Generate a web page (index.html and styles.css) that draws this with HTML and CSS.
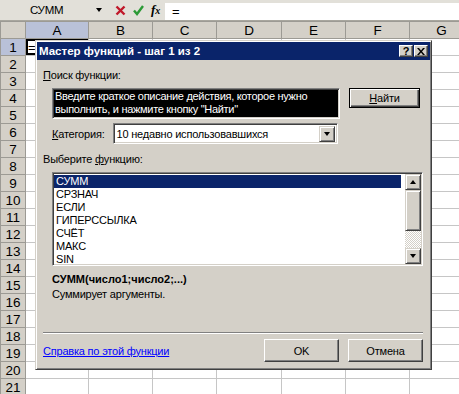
FILE: index.html
```html
<!DOCTYPE html>
<html lang="ru">
<head>
  <meta charset="UTF-8" />
  <title>Мастер функций</title>
  <link rel="stylesheet" href="styles.css">
</head>
<body>
  <div class="formula-bar">
    <div class="name-box">СУММ<span class="name-arrow"></span></div>
    <div class="fb-buttons">
      <svg width="11" height="11" viewBox="0 0 11 11"><path d="M1.5 1.5 L9.5 9.5 M9.5 1.5 L1.5 9.5" stroke="#c0182a" stroke-width="2.4"/></svg>
      <svg width="11" height="11" viewBox="0 0 11 11"><path d="M1 5.5 L4 9 L10 1" fill="none" stroke="#2c9a36" stroke-width="2.4"/></svg>
      <span class="fx">f<span>x</span></span>
    </div>
    <div class="fb-input">=</div>
  </div>

  <table class="sheet">
    <colgroup>
      <col class="c-head"><col class="c-a"><col><col><col class="c-d"><col><col><col>
    </colgroup>
    <tr><th></th><th class="active">A</th><th>B</th><th>C</th><th>D</th><th>E</th><th>F</th><th>G</th></tr>
    <tr><th class="active">1</th><td class="current">=</td><td></td><td></td><td></td><td></td><td></td><td></td></tr>
    <tr><th>2</th><td></td><td></td><td></td><td></td><td></td><td></td><td></td></tr>
    <tr><th>3</th><td></td><td></td><td></td><td></td><td></td><td></td><td></td></tr>
    <tr><th>4</th><td></td><td></td><td></td><td></td><td></td><td></td><td></td></tr>
    <tr><th>5</th><td></td><td></td><td></td><td></td><td></td><td></td><td></td></tr>
    <tr><th>6</th><td></td><td></td><td></td><td></td><td></td><td></td><td></td></tr>
    <tr><th>7</th><td></td><td></td><td></td><td></td><td></td><td></td><td></td></tr>
    <tr><th>8</th><td></td><td></td><td></td><td></td><td></td><td></td><td></td></tr>
    <tr><th>9</th><td></td><td></td><td></td><td></td><td></td><td></td><td></td></tr>
    <tr><th>10</th><td></td><td></td><td></td><td></td><td></td><td></td><td></td></tr>
    <tr><th>11</th><td></td><td></td><td></td><td></td><td></td><td></td><td></td></tr>
    <tr><th>12</th><td></td><td></td><td></td><td></td><td></td><td></td><td></td></tr>
    <tr><th>13</th><td></td><td></td><td></td><td></td><td></td><td></td><td></td></tr>
    <tr><th>14</th><td></td><td></td><td></td><td></td><td></td><td></td><td></td></tr>
    <tr><th>15</th><td></td><td></td><td></td><td></td><td></td><td></td><td></td></tr>
    <tr><th>16</th><td></td><td></td><td></td><td></td><td></td><td></td><td></td></tr>
    <tr><th>17</th><td></td><td></td><td></td><td></td><td></td><td></td><td></td></tr>
    <tr><th>18</th><td></td><td></td><td></td><td></td><td></td><td></td><td></td></tr>
    <tr><th>19</th><td></td><td></td><td></td><td></td><td></td><td></td><td></td></tr>
    <tr><th>20</th><td></td><td></td><td></td><td></td><td></td><td></td><td></td></tr>
    <tr><th>21</th><td></td><td></td><td></td><td></td><td></td><td></td><td></td></tr>
  </table>

  <div class="dialog">
    <div class="dlg-title">
      <span>Мастер функций - шаг 1 из 2</span>
      <div class="title-btns">
        <span class="tbtn">?</span>
        <span class="tbtn">
          <svg width="8" height="7" viewBox="0 0 8 7"><path d="M0 0h2l2 2.5L6 0h2L5 3.5 8 7H6L4 4.5 2 7H0l3-3.5z"/></svg>
        </span>
      </div>
    </div>

    <div class="dlg-body">
      <div class="lbl"><u>П</u>оиск функции:</div>
      <div class="search-row">
        <div class="search-box">Введите краткое описание действия, которое нужно выполнить, и нажмите кнопку "Найти"</div>
        <button class="btn btn-default"><u>Н</u>айти</button>
      </div>

      <div class="cat-row">
        <span><u>К</u>атегория:</span>
        <div class="combo">
          <span class="combo-text">10 недавно использовавшихся</span>
          <span class="sb-btn combo-btn"><i class="arrow-down"></i></span>
        </div>
      </div>

      <div class="lbl lbl-list">Выберите <u>ф</u>ункцию:</div>
      <div class="listbox">
        <ul class="fn-list">
          <li class="selected">СУММ</li>
          <li>СРЗНАЧ</li>
          <li>ЕСЛИ</li>
          <li>ГИПЕРССЫЛКА</li>
          <li>СЧЁТ</li>
          <li>МАКС</li>
          <li>SIN</li>
        </ul>
        <div class="vscroll">
          <span class="sb-btn"><i class="arrow-up"></i></span>
          <span class="sb-thumb"></span>
          <span class="sb-track"></span>
          <span class="sb-btn"><i class="arrow-down"></i></span>
        </div>
      </div>

      <div class="fn-sig">СУММ(число1;число2;...)</div>
      <div class="fn-desc">Суммирует аргументы.</div>

      <div class="sep"></div>

      <div class="dlg-footer">
        <a href="#" class="help-link">Справка по этой функции</a>
        <div class="footer-btns">
          <button class="btn">OK</button>
          <button class="btn">Отмена</button>
        </div>
      </div>
    </div>
  </div>
</body>
</html>
```

FILE: styles.css
```css
body {
  margin: 0;
  width: 459px;
  height: 394px;
  overflow: hidden;
  position: relative;
  background: #fff;
  font-family: "Liberation Sans", Arial, sans-serif;
  color: #000;
}

/* formula bar */
.formula-bar {
  display: flex;
  height: 21px;
  box-sizing: border-box;
  background: #e2e0d9;
  border-bottom: 1px solid #a8a69e;
}
.name-box {
  width: 106px;
  box-sizing: border-box;
  display: flex;
  align-items: center;
  padding: 0 4px 0 30px;
  font-size: 11.5px;
  letter-spacing: -0.3px;
}
.name-arrow {
  margin-left: auto;
  border-left: 3px solid transparent;
  border-right: 3px solid transparent;
  border-top: 4px solid #000;
}
.fb-buttons {
  width: 59px;
  display: flex;
  align-items: center;
  gap: 7px;
  padding-left: 9px;
  box-sizing: border-box;
}
.fx {
  font-family: "Liberation Serif", serif;
  font-style: italic;
  font-weight: bold;
  font-size: 13px;
}
.fx span {
  font-size: 10px;
}
.fb-input {
  flex: 1;
  margin-top: 3px;
  background: #fff;
  padding-left: 7px;
  font-size: 13px;
  line-height: 17px;
}

/* sheet */
.sheet {
  border-collapse: collapse;
  table-layout: fixed;
  width: 474px;
}
.sheet col { width: 64px; }
.sheet .c-head { width: 25px; }
.sheet .c-a { width: 63px; }
.sheet .c-d { width: 65px; }
.sheet tr { height: 17px; }
.sheet th {
  background: #d4d0c8;
  border: 1px solid #9c9a94;
  font-weight: normal;
  font-size: 13.5px;
  padding: 0;
  line-height: 15px;
}
.sheet th.active { background: #b9c1d8; }
.sheet td {
  border: 1px solid #c6c6c6;
  padding: 0 2px;
  font-size: 13px;
  line-height: 15px;
}
.sheet td.current { box-shadow: inset 0 0 0 2px #000; }

/* dialog */
.dialog {
  position: absolute;
  left: 35px;
  top: 40px;
  width: 397px;
  height: 330px;
  box-sizing: border-box;
  padding: 1px;
  background: #d4d0c8;
  border: 1px solid;
  border-color: #d4d0c8 #404040 #404040 #d4d0c8;
  box-shadow: inset 1px 1px #fff, inset -1px -1px #808080;
  font-size: 11px;
  letter-spacing: -0.2px;
}
.dlg-title {
  height: 18px;
  background: #0a246a;
  color: #fff;
  font-weight: bold;
  font-size: 11.5px;
  display: flex;
  align-items: center;
  padding: 0 2px 0 2px;
  letter-spacing: 0;
}
.title-btns {
  margin-left: auto;
  display: flex;
  gap: 1px;
}
.tbtn {
  width: 14px;
  height: 12px;
  box-sizing: border-box;
  background: #d4d0c8;
  border: 1px solid;
  border-color: #fff #404040 #404040 #fff;
  box-shadow: inset -1px -1px #808080;
  color: #000;
  font-size: 11px;
  line-height: 10px;
  text-align: center;
  display: flex;
  align-items: center;
  justify-content: center;
}

.dlg-body {
  padding: 0 7px 0 6px;
}
.lbl {
  margin-top: 9px;
  line-height: 13px;
}
.lbl-list { margin-top: 9px; }

.search-row {
  display: flex;
  align-items: flex-start;
  gap: 9px;
  margin: 6px 0 0 9px;
}
.search-box {
  width: 288px;
  height: 31px;
  box-sizing: border-box;
  padding: 1px 2px;
  background: #000;
  color: #fff;
  line-height: 13px;
  letter-spacing: -0.3px;
  border: 1px solid;
  border-color: #808080 #fff #fff #808080;
  box-shadow: inset 1px 1px #404040, inset -1px -1px #d4d0c8;
}

.btn {
  font: inherit;
  letter-spacing: inherit;
  color: #000;
  background: #d4d0c8;
  width: 75px;
  height: 23px;
  padding: 0;
  border: 1px solid;
  border-color: #fff #404040 #404040 #fff;
  box-shadow: inset -1px -1px #808080;
}
.btn-default {
  width: 71px;
  height: 20px;
  border-color: #000;
  box-shadow: inset 1px 1px #fff, inset -1px -1px #404040, inset -2px -2px #808080;
}

.cat-row {
  display: flex;
  align-items: center;
  gap: 8px;
  margin: 4px 0 0 9px;
}
.combo {
  width: 225px;
  height: 21px;
  box-sizing: border-box;
  display: flex;
  align-items: center;
  background: #fff;
  border: 1px solid;
  border-color: #808080 #fff #fff #808080;
  box-shadow: inset 1px 1px #404040, inset -1px -1px #d4d0c8;
  padding: 2px 2px 2px 3px;
}
.combo-btn {
  margin-left: auto;
  height: 17px;
}

.sb-btn {
  width: 16px;
  height: 16px;
  box-sizing: border-box;
  display: flex;
  align-items: center;
  justify-content: center;
  background: #d4d0c8;
  border: 1px solid;
  border-color: #d4d0c8 #404040 #404040 #d4d0c8;
  box-shadow: inset 1px 1px #fff, inset -1px -1px #808080;
}
.arrow-down, .arrow-up {
  width: 0;
  height: 0;
  border-left: 3.5px solid transparent;
  border-right: 3.5px solid transparent;
}
.arrow-down { border-top: 4px solid #000; }
.arrow-up { border-bottom: 4px solid #000; }

.listbox {
  display: flex;
  width: 371px;
  height: 94px;
  box-sizing: border-box;
  margin: 6px 0 0 9px;
  background: #fff;
  border: 1px solid;
  border-color: #808080 #fff #fff #808080;
  box-shadow: inset 1px 1px #404040, inset -1px -1px #d4d0c8;
  padding: 1px;
}
.fn-list {
  list-style: none;
  margin: 1px 4px 0 0;
  padding: 0;
  flex: 1;
}
.fn-list li {
  height: 13px;
  line-height: 13px;
  padding-left: 2px;
}
.fn-list li.selected {
  background: #0a246a;
  color: #fff;
}
.vscroll {
  width: 16px;
  display: flex;
  flex-direction: column;
}
.sb-thumb {
  height: 41px;
  box-sizing: border-box;
  background: #d4d0c8;
  border: 1px solid;
  border-color: #d4d0c8 #404040 #404040 #d4d0c8;
  box-shadow: inset 1px 1px #fff, inset -1px -1px #808080;
}
.sb-track {
  flex: 1;
  background: repeating-conic-gradient(#fff 0 25%, #d4d0c8 0 50%) 0 0 / 2px 2px;
}

.fn-sig {
  margin: 6px 0 0 9px;
  font-weight: bold;
  letter-spacing: 0;
  line-height: 15px;
}
.fn-desc {
  margin-left: 9px;
  line-height: 15px;
}

.sep {
  margin: 30px 0 0 0;
  border-top: 1px solid #808080;
  border-bottom: 1px solid #fff;
}

.dlg-footer {
  display: flex;
  align-items: center;
  margin-top: 5px;
}
.help-link {
  color: #0000ff;
  text-decoration: underline;
}
.footer-btns {
  margin-left: auto;
  display: flex;
  gap: 9px;
}
```
